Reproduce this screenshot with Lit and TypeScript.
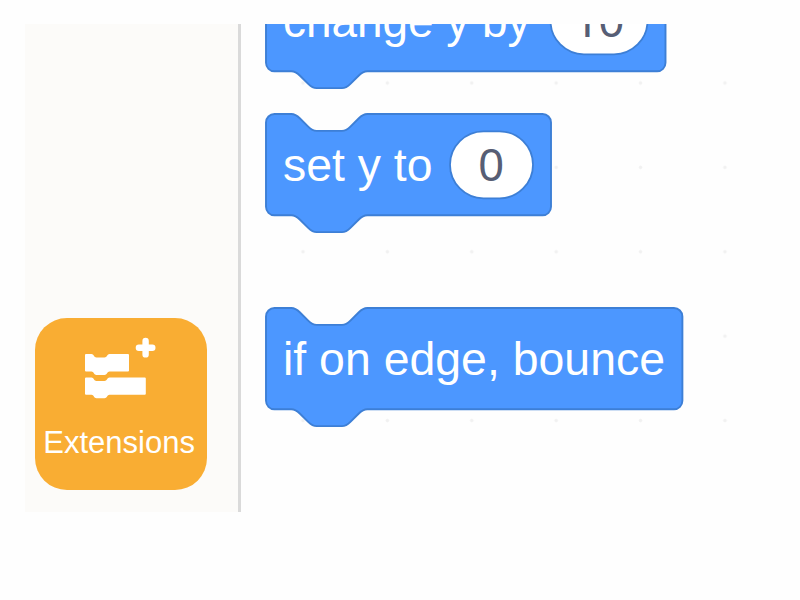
import { LitElement, html, svg, css } from "lit";
import { customElement, property } from "lit/decorators.js";

// Workspace zoom: pixels per block unit.
const SCALE = 2.11;

@customElement("stack-block")
export class StackBlock extends LitElement {
  static styles = css`
    :host { display: block; height: 122px; }
    svg { display: block; overflow: visible; }
    .shape { fill: #4c97ff; stroke: #3d7fd6; stroke-width: 0.9; }
    .input { fill: #fff; stroke: #3d7fd6; stroke-width: 1.8; }
    text { font-family: "Liberation Sans", Arial, sans-serif; font-size: 46px; fill: #fff; }
    .value { font-size: 45.5px; fill: #575e75; text-anchor: middle; }
    .one { font-family: Roboto, "Liberation Sans", sans-serif; }
  `;
  @property() label = "";
  @property() value = "";
  @property({ type: Number }) width = 200;
  @property({ type: Number }) labelWidth = 100;
  @property({ type: Number }) inputWidth = 83;

  render() {
    const w = this.width / SCALE - 4;
    const left = this.width - 18 - this.inputWidth;
    const digits = [...this.value].map((d) => svg`<tspan class=${d === "1" ? "one" : "digit"}>${d}</tspan>`);
    return html`<svg width=${this.width} height="122">
      <path class="shape" transform="scale(${SCALE})"
        d="M0 4A4 4 0 0 1 4 0H12c2 0 3 1 4 2l4 4c1 1 2 2 4 2h12c2 0 3-1 4-2l4-4c1-1 2-2 4-2H${w}a4 4 0 0 1 4 4v40a4 4 0 0 1-4 4H48c-2 0-3 1-4 2l-4 4c-1 1-2 2-4 2H24c-2 0-3-1-4-2l-4-4c-1-1-2-2-4-2H4a4 4 0 0 1-4-4z"></path>
      <text x="17" y="66.8" textLength=${this.labelWidth} lengthAdjust="spacingAndGlyphs">${this.label}</text>
      ${this.value
        ? svg`<rect class="input" x=${left} y="17.3" width=${this.inputWidth} height="67" rx="33.5"></rect>
            <text class="value" x=${left + this.inputWidth / 2 - 0.4} y="66.8">${digits}</text>`
        : ""}
    </svg>`;
  }
}

@customElement("extension-button")
export class ExtensionButton extends LitElement {
  static styles = css`
    :host {
      display: flex; flex-direction: column; align-items: center;
      width: 172px; height: 172px; border-radius: 32px; background: #f9ad33;
      box-sizing: border-box; padding-top: 19px; color: #fff;
    }
    svg { display: block; width: 72px; height: 62px; fill: #fff; margin-left: -1px; }
    .plus { stroke: #fff; stroke-width: 6.4; stroke-linecap: round; }
    .label { font: 31px/36px "Liberation Sans", Arial, sans-serif; margin-top: 25.5px; margin-left: -3px; }
  `;
  render() {
    return html`
      <svg viewBox="84 337 72 62">
        <path d="M86 354h5.5c2.2 0 2.6 3.5 5 3.5h8c2.4 0 2.8-3.5 5-3.5h18.5q1 0 1 1v15.5q0 1-1 1h-18.5c-2.2 0-2.6 3.5-5 3.5h-8c-2.4 0-2.8-3.5-5-3.5H86q-1 0-1-1V355q0-1 1-1z"></path>
        <path d="M86 377.5h5.5c2.2 0 2.6 3.5 5 3.5h8c2.4 0 2.8-3.5 5-3.5h35.3q1 0 1 1v15.2q0 1-1 1h-35.3c-2.2 0-2.6 3.5-5 3.5h-8c-2.4 0-2.8-3.5-5-3.5H86q-1 0-1-1v-15.2q0-1 1-1z"></path>
        <path class="plus" d="M145.6 341v13.4M138.9 347.7h13.4"></path>
      </svg>
      <span class="label">Extensions</span>`;
  }
}

@customElement("app-root")
export class AppRoot extends LitElement {
  static styles = css`
    :host { display: block; width: 800px; height: 600px; background: #fefefe; overflow: hidden; box-sizing: border-box; padding: 24px 25px 0; }
    .editor { display: flex; height: 488px; overflow: hidden; }
    .categories {
      width: 216px; box-sizing: border-box; background: #fcfbf9; border-right: 3px solid #dadada;
      display: flex; flex-direction: column; justify-content: flex-end; padding: 0 0 22px 9.6px;
    }
    .palette {
      flex: 1; overflow: hidden; padding: 0 0 30px 25px;
      background: radial-gradient(circle at center, #f1f1f1 0 1.2px, transparent 2.2px) 19.8px 16.8px / 84.4px 84.4px;
      background-clip: content-box;
    }
    .blocks { display: flex; flex-direction: column; margin-top: -53.7px; }
    .second { margin-top: 21.2px; }
    .third { margin-top: 72.2px; }
  `;
  render() {
    return html`<div class="editor">
      <div class="categories"><extension-button></extension-button></div>
      <div class="palette">
        <div class="blocks">
          <stack-block label="change y by" value="10" width="399.5" labelWidth="247.5" inputWidth="97"></stack-block>
          <stack-block class="second" label="set y to" value="0" width="285" labelWidth="149.5"></stack-block>
          <stack-block class="third" label="if on edge, bounce" width="416.4" labelWidth="382"></stack-block>
        </div>
      </div>
    </div>`;
  }
}
